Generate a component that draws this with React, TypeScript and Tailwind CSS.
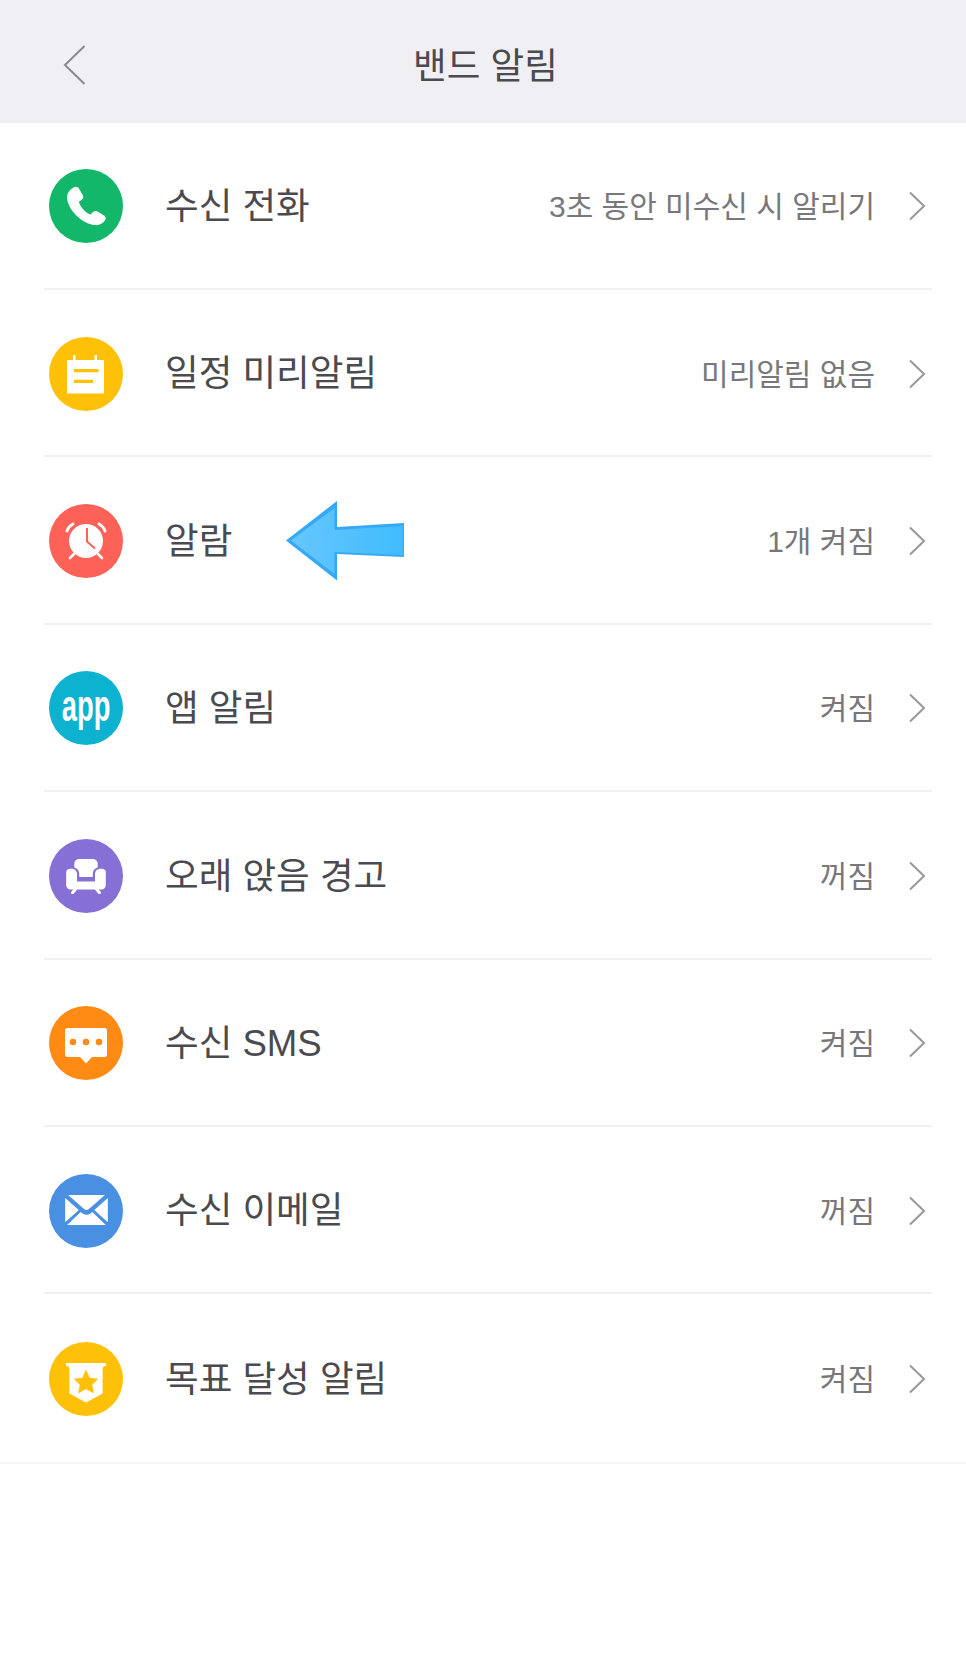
import React from "react";

const Chevron = () => (
  <svg width="20" height="32" viewBox="0 0 20 32" fill="none" className="shrink-0">
    <path d="M3 2.5 L17 16 L3 29.5" stroke="#97979c" strokeWidth="2" />
  </svg>
);

const Phone = () => (
  <svg width="40" height="40" viewBox="7.5 4 34 34">
    <path
      d="M13.5 5.5 C15.5 4.2 17.5 4.6 18.6 6.4 L21.6 11.5 C22.6 13.2 22.2 15 20.6 16 L18.5 17.4 C19.2 21.5 24.5 27.2 28.4 28.3 L30.2 26.4 C31.4 25.1 33.2 24.9 34.8 25.9 L39.8 29 C41.4 30 41.6 32 40.4 33.6 C38.6 36.2 35.5 37.6 32 37.2 C21 36 9.6 24.5 8.4 14.8 C8 11 10 7.6 13.5 5.5 Z"
      fill="#fff"
    />
  </svg>
);

const Note = () => (
  <svg width="44" height="44" viewBox="-22 -22 44 44">
    <path
      fillRule="evenodd"
      d="M-19 -14 H-13 V-19 H-10.5 V-14 H8.5 V-19 H11 V-14 H18 V19.5 H-19 Z M-12 -5 V-1.8 H12.5 V-5 Z M-12 5.8 V9 H7 V5.8 Z"
      fill="#fff"
    />
  </svg>
);

const Clock = () => (
  <svg width="44" height="44" viewBox="-22 -22 44 44">
    <circle cx="0" cy="0" r="17" fill="#fff" />
    <path d="M-19 -10 C-18 -13 -16 -15.5 -13 -17" stroke="#fff" strokeWidth="3" fill="none" strokeLinecap="round" />
    <path d="M19 -10 C18 -13 16 -15.5 13 -17" stroke="#fff" strokeWidth="3" fill="none" strokeLinecap="round" />
    <path d="M-12 13 L-16 17 M12 13 L16 17" stroke="#fff" strokeWidth="2.6" strokeLinecap="round" />
    <path d="M1 -13 V0.5 L9 7.5" stroke="#fe6158" strokeWidth="2" fill="none" />
  </svg>
);

const Sofa = () => (
  <svg width="42" height="36" viewBox="0 0 46 40">
    <path
      d="M10 6 C10 3 12.5 1 16 1 H30 C33.5 1 36 3 36 6 V10.5 C32.5 11.5 30.5 14 30.5 18 V21 H15.5 V18 C15.5 14 13.5 11.5 10 10.5 Z"
      fill="#fff"
    />
    <path
      d="M1 15.5 C1 13.5 3 12 5 12 H7 C10.5 12 13 14.5 13 18 V26 H33 V18 C33 14.5 35.5 12 39 12 H41 C43 12 45 13.5 45 15.5 V30 C45 33 43 35 40 35 H6 C3 35 1 33 1 30 Z"
      fill="#fff"
    />
    <path d="M11 35 L8 38.5 M35 35 L38 38.5" stroke="#fff" strokeWidth="3.4" strokeLinecap="round" />
  </svg>
);

const Chat = () => (
  <svg width="42" height="36" viewBox="0 0 42 36" className="mt-[6px]">
    <path
      d="M0 2.5 C0 1 1 0 2.5 0 H39.5 C41 0 42 1 42 2.5 V26.5 C42 28 41 29 39.5 29 H27 L21 35.5 L15 29 H2.5 C1 29 0 28 0 26.5 Z"
      fill="#fff"
    />
    <circle cx="8" cy="14" r="3.3" fill="#ff8b14" />
    <circle cx="21" cy="14" r="3.3" fill="#ff8b14" />
    <circle cx="34" cy="14" r="3.3" fill="#ff8b14" />
  </svg>
);

const Mail = () => (
  <svg width="43" height="31" viewBox="0 0 44 32">
    <path d="M3 0 H41 L24.5 14.5 C23 15.8 21 15.8 19.5 14.5 Z" fill="#fff" />
    <path d="M0 3 L14 15.5 L0 28 Z M44 3 L30 15.5 L44 28 Z" fill="#fff" />
    <path d="M16 17.5 L18 19 C20.5 21 23.5 21 26 19 L28 17.5 L42 31 H2 Z" fill="#fff" />
  </svg>
);

const Badge = () => (
  <svg width="40" height="41" viewBox="0 0 42 43" className="mt-[6px]">
    <path
      d="M0 1 H42 V4 C39.5 4.5 38.5 5.5 38.5 7 V33 L21 42.5 L3.5 33 V7 C3.5 5.5 2.5 4.5 0 4 Z"
      fill="#fff"
    />
    <path
      d="M21 9 L24.6 17 L33 18 L27 23.8 L28.6 32 L21 28 L13.4 32 L15 23.8 L9 18 L17.4 17 Z"
      fill="#ffc107"
      stroke="#ffc107"
      strokeWidth="1"
      strokeLinejoin="round"
    />
  </svg>
);

const Arrow = () => (
  <svg width="118" height="80" viewBox="0 0 118 80" className="ml-[54px] shrink-0">
    <defs>
      <linearGradient id="arrowFill" x1="0" y1="0" x2="1" y2="0">
        <stop offset="0" stopColor="#66c6fc" />
        <stop offset="1" stopColor="#40bcff" />
      </linearGradient>
    </defs>
    <path d="M0 39.5 L51 0 V26 L118 22 V56 L51 53 V79.5 Z" fill="#35a9f6" />
    <path d="M5 39.5 L48.5 7 V29 L117 25 V54 L48.5 51 V73 Z" fill="url(#arrowFill)" />
  </svg>
);

const rows: {
  label: string;
  value: string;
  color: string;
  icon: React.ReactNode;
  arrow?: boolean;
}[] = [
  { label: "수신 전화", value: "3초 동안 미수신 시 알리기", color: "bg-[#12b76a]", icon: <Phone /> },
  { label: "일정 미리알림", value: "미리알림 없음", color: "bg-[#ffc107]", icon: <Note /> },
  { label: "알람", value: "1개 켜짐", color: "bg-[#fe6158]", icon: <Clock />, arrow: true },
  {
    label: "앱 알림",
    value: "켜짐",
    color: "bg-[#0cb2cf]",
    icon: (
      <span className="inline-block -mt-[4px] scale-x-[0.62] font-['Liberation_Sans',sans-serif] text-[44px] font-bold leading-none text-white">
        app
      </span>
    ),
  },
  { label: "오래 앉음 경고", value: "꺼짐", color: "bg-[#8670d6]", icon: <Sofa /> },
  { label: "수신 SMS", value: "켜짐", color: "bg-[#ff8b14]", icon: <Chat /> },
  { label: "수신 이메일", value: "꺼짐", color: "bg-[#4a90e2]", icon: <Mail /> },
  { label: "목표 달성 알림", value: "켜짐", color: "bg-[#ffc107]", icon: <Badge /> },
];

export default function App() {
  return (
    <div className="min-h-[1654px] w-full bg-white font-['Liberation_Sans','Noto_Sans_CJK_KR',sans-serif] text-[#4a4a4f]">
      <header className="relative flex h-[122.6px] items-center justify-center bg-[#f0eff4]">
        <svg width="24" height="42" viewBox="0 0 24 42" fill="none" className="absolute left-[62px] top-[44px]">
          <path d="M22.5 2 L3 21 L22.5 40" stroke="#8a8a8e" strokeWidth="2" />
        </svg>
        <h1 className="mt-[12px] ml-[5px] text-[36.6px] font-normal leading-none">밴드 알림</h1>
      </header>
      <ul>
        {rows.map((r, i) => (
          <li key={r.label} className={i === rows.length - 1 ? "border-b-2 border-[#f8f6f9]" : ""}>
            <div
              className={`ml-[44px] mr-[34px] flex h-[167.4px] items-center pl-[5px] pr-[5px] pt-[2px] ${
                i === rows.length - 1 ? "" : "border-b-2 border-[#f0eff2]"
              }`}
            >
              <div className={`flex h-[74px] w-[74px] shrink-0 items-center justify-center rounded-full ${r.color}`}>
                {r.icon}
              </div>
              <span className="ml-[42px] mt-[2px] whitespace-nowrap text-[36.6px] leading-none">{r.label}</span>
              {r.arrow && <Arrow />}
              <span className="ml-auto mt-[2px] whitespace-nowrap text-[30px] leading-none text-[#78777c]">{r.value}</span>
              <span className="ml-[32px] flex">
                <Chevron />
              </span>
            </div>
          </li>
        ))}
      </ul>
    </div>
  );
}
